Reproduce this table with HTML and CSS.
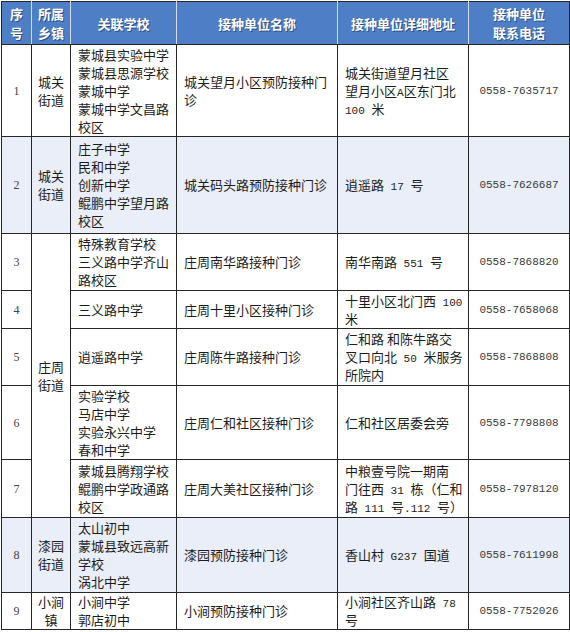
FILE: index.html
```html
<!DOCTYPE html>
<html lang="zh">
<head>
<meta charset="utf-8">
<title>预防接种门诊</title>
<link rel="stylesheet" href="styles.css">
</head>
<body>
<table class="sheet">
  <colgroup>
    <col class="c-no"><col class="c-town"><col class="c-school"><col class="c-name"><col class="c-addr"><col class="c-tel">
  </colgroup>
  <thead>
    <tr class="head">
      <th>序<br>号</th>
      <th>所属<br>乡镇</th>
      <th>关联学校</th>
      <th>接种单位名称</th>
      <th>接种单位详细地址</th>
      <th>接种单位<br>联系电话</th>
    </tr>
  </thead>
  <tbody>
    <tr class="r1">
      <td class="no">1</td>
      <td class="town">城关<br>街道</td>
      <td class="txt">蒙城县实验中学<br>蒙城县思源学校<br>蒙城中学<br>蒙城中学文昌路<br>校区</td>
      <td class="txt">城关望月小区预防接种门<br>诊</td>
      <td class="txt">城关街道望月社区<br>望月小区<span class="num">A</span>区东门北<br><span class="num">100 </span>米</td>
      <td class="tel">0558-7635717</td>
    </tr>
    <tr class="r2 tint">
      <td class="no">2</td>
      <td class="town">城关<br>街道</td>
      <td class="txt">庄子中学<br>民和中学<br>创新中学<br>鲲鹏中学望月路<br>校区</td>
      <td class="txt">城关码头路预防接种门诊</td>
      <td class="txt">逍遥路<span class="num"> 17 </span>号</td>
      <td class="tel">0558-7626687</td>
    </tr>
    <tr class="r3">
      <td class="no">3</td>
      <td class="town white" rowspan="5">庄周<br>街道</td>
      <td class="txt">特殊教育学校<br>三义路中学齐山<br>路校区</td>
      <td class="txt">庄周南华路接种门诊</td>
      <td class="txt">南华南路<span class="num"> 551 </span>号</td>
      <td class="tel">0558-7868820</td>
    </tr>
    <tr class="r4">
      <td class="no">4</td>
      <td class="txt">三义路中学</td>
      <td class="txt">庄周十里小区接种门诊</td>
      <td class="txt">十里小区北门西<span class="num"> 100</span><br>米</td>
      <td class="tel">0558-7658068</td>
    </tr>
    <tr class="r5">
      <td class="no">5</td>
      <td class="txt">逍遥路中学</td>
      <td class="txt">庄周陈牛路接种门诊</td>
      <td class="txt">仁和路 和陈牛路交<br>叉口向北<span class="num"> 50 </span>米服务<br>所院内</td>
      <td class="tel">0558-7868808</td>
    </tr>
    <tr class="r6">
      <td class="no">6</td>
      <td class="txt">实验学校<br>马店中学<br>实验永兴中学<br>春和中学</td>
      <td class="txt">庄周仁和社区接种门诊</td>
      <td class="txt">仁和社区居委会旁</td>
      <td class="tel">0558-7798808</td>
    </tr>
    <tr class="r7">
      <td class="no">7</td>
      <td class="txt">蒙城县腾翔学校<br>鲲鹏中学政通路<br>校区</td>
      <td class="txt">庄周大美社区接种门诊</td>
      <td class="txt">中粮壹号院一期南<br>门往西<span class="num"> 31 </span>栋（仁和<br>路<span class="num"> 111 </span>号<span class="num">.112 </span>号）</td>
      <td class="tel">0558-7978120</td>
    </tr>
    <tr class="r8 tint">
      <td class="no">8</td>
      <td class="town">漆园<br>街道</td>
      <td class="txt">太山初中<br>蒙城县致远高新<br>学校<br>涡北中学</td>
      <td class="txt">漆园预防接种门诊</td>
      <td class="txt">香山村<span class="num"> G237 </span>国道</td>
      <td class="tel">0558-7611998</td>
    </tr>
    <tr class="r9">
      <td class="no">9</td>
      <td class="town">小涧<br>镇</td>
      <td class="txt">小涧中学<br>郭店初中</td>
      <td class="txt">小涧预防接种门诊</td>
      <td class="txt">小涧社区齐山路<span class="num"> 78</span><br>号</td>
      <td class="tel">0558-7752026</td>
    </tr>
  </tbody>
</table>
</body>
</html>
```

FILE: styles.css
```css
html, body {
  margin: 0;
  padding: 0;
  background: #ffffff;
}

body {
  padding: 1px 0 0 1px;
  font-family: "Noto Sans CJK SC", "Noto Sans", sans-serif;
  font-size: 13px;
  color: #1c1c1c;
}

.sheet {
  border-collapse: collapse;
  table-layout: fixed;
  width: 569px;
}

.c-no { width: 30px; }
.c-town { width: 39px; }
.c-school { width: 106px; }
.c-name { width: 161px; }
.c-addr { width: 131px; }
.c-tel { width: 101px; }

.sheet th,
.sheet td {
  border: 1px solid #262626;
  padding: 0;
  line-height: 18px;
  white-space: nowrap;
  overflow: hidden;
}

.head th {
  background: #4d7ec6;
  color: #ffffff;
  font-weight: bold;
  line-height: 19px;
  height: 42px;
  text-align: center;
  text-shadow: 1px 1px 0 #2d4f86;
  border-left-color: #d4dcea;
  border-right-color: #d4dcea;
}

.head th:first-child { border-left-color: #262626; }
.head th:last-child { border-right-color: #262626; }

.tint td { background: #e9eef8; }
.tint td.white, td.white { background: #ffffff; }

.no {
  text-align: center;
  font-family: "Liberation Serif", serif;
  font-size: 12px;
  color: #444;
}

.town {
  text-align: center;
}

.txt {
  padding: 0 6px 0 7px !important;
}

.num {
  font-family: "Liberation Mono", monospace;
  font-size: 11px;
  line-height: 1;
}

.tel {
  text-align: center;
  font-family: "Liberation Mono", monospace;
  font-size: 11px;
  color: #3a3a3a;
}

.r1 td { height: 91px; }
.r2 td { height: 96px; }
.r3 td { height: 56px; }
.r4 td { height: 37px; }
.r5 td { height: 56px; }
.r6 td { height: 73px; }
.r7 td { height: 57px; }
.r8 td { height: 74px; }
.r9 td { height: 36px; }
```
